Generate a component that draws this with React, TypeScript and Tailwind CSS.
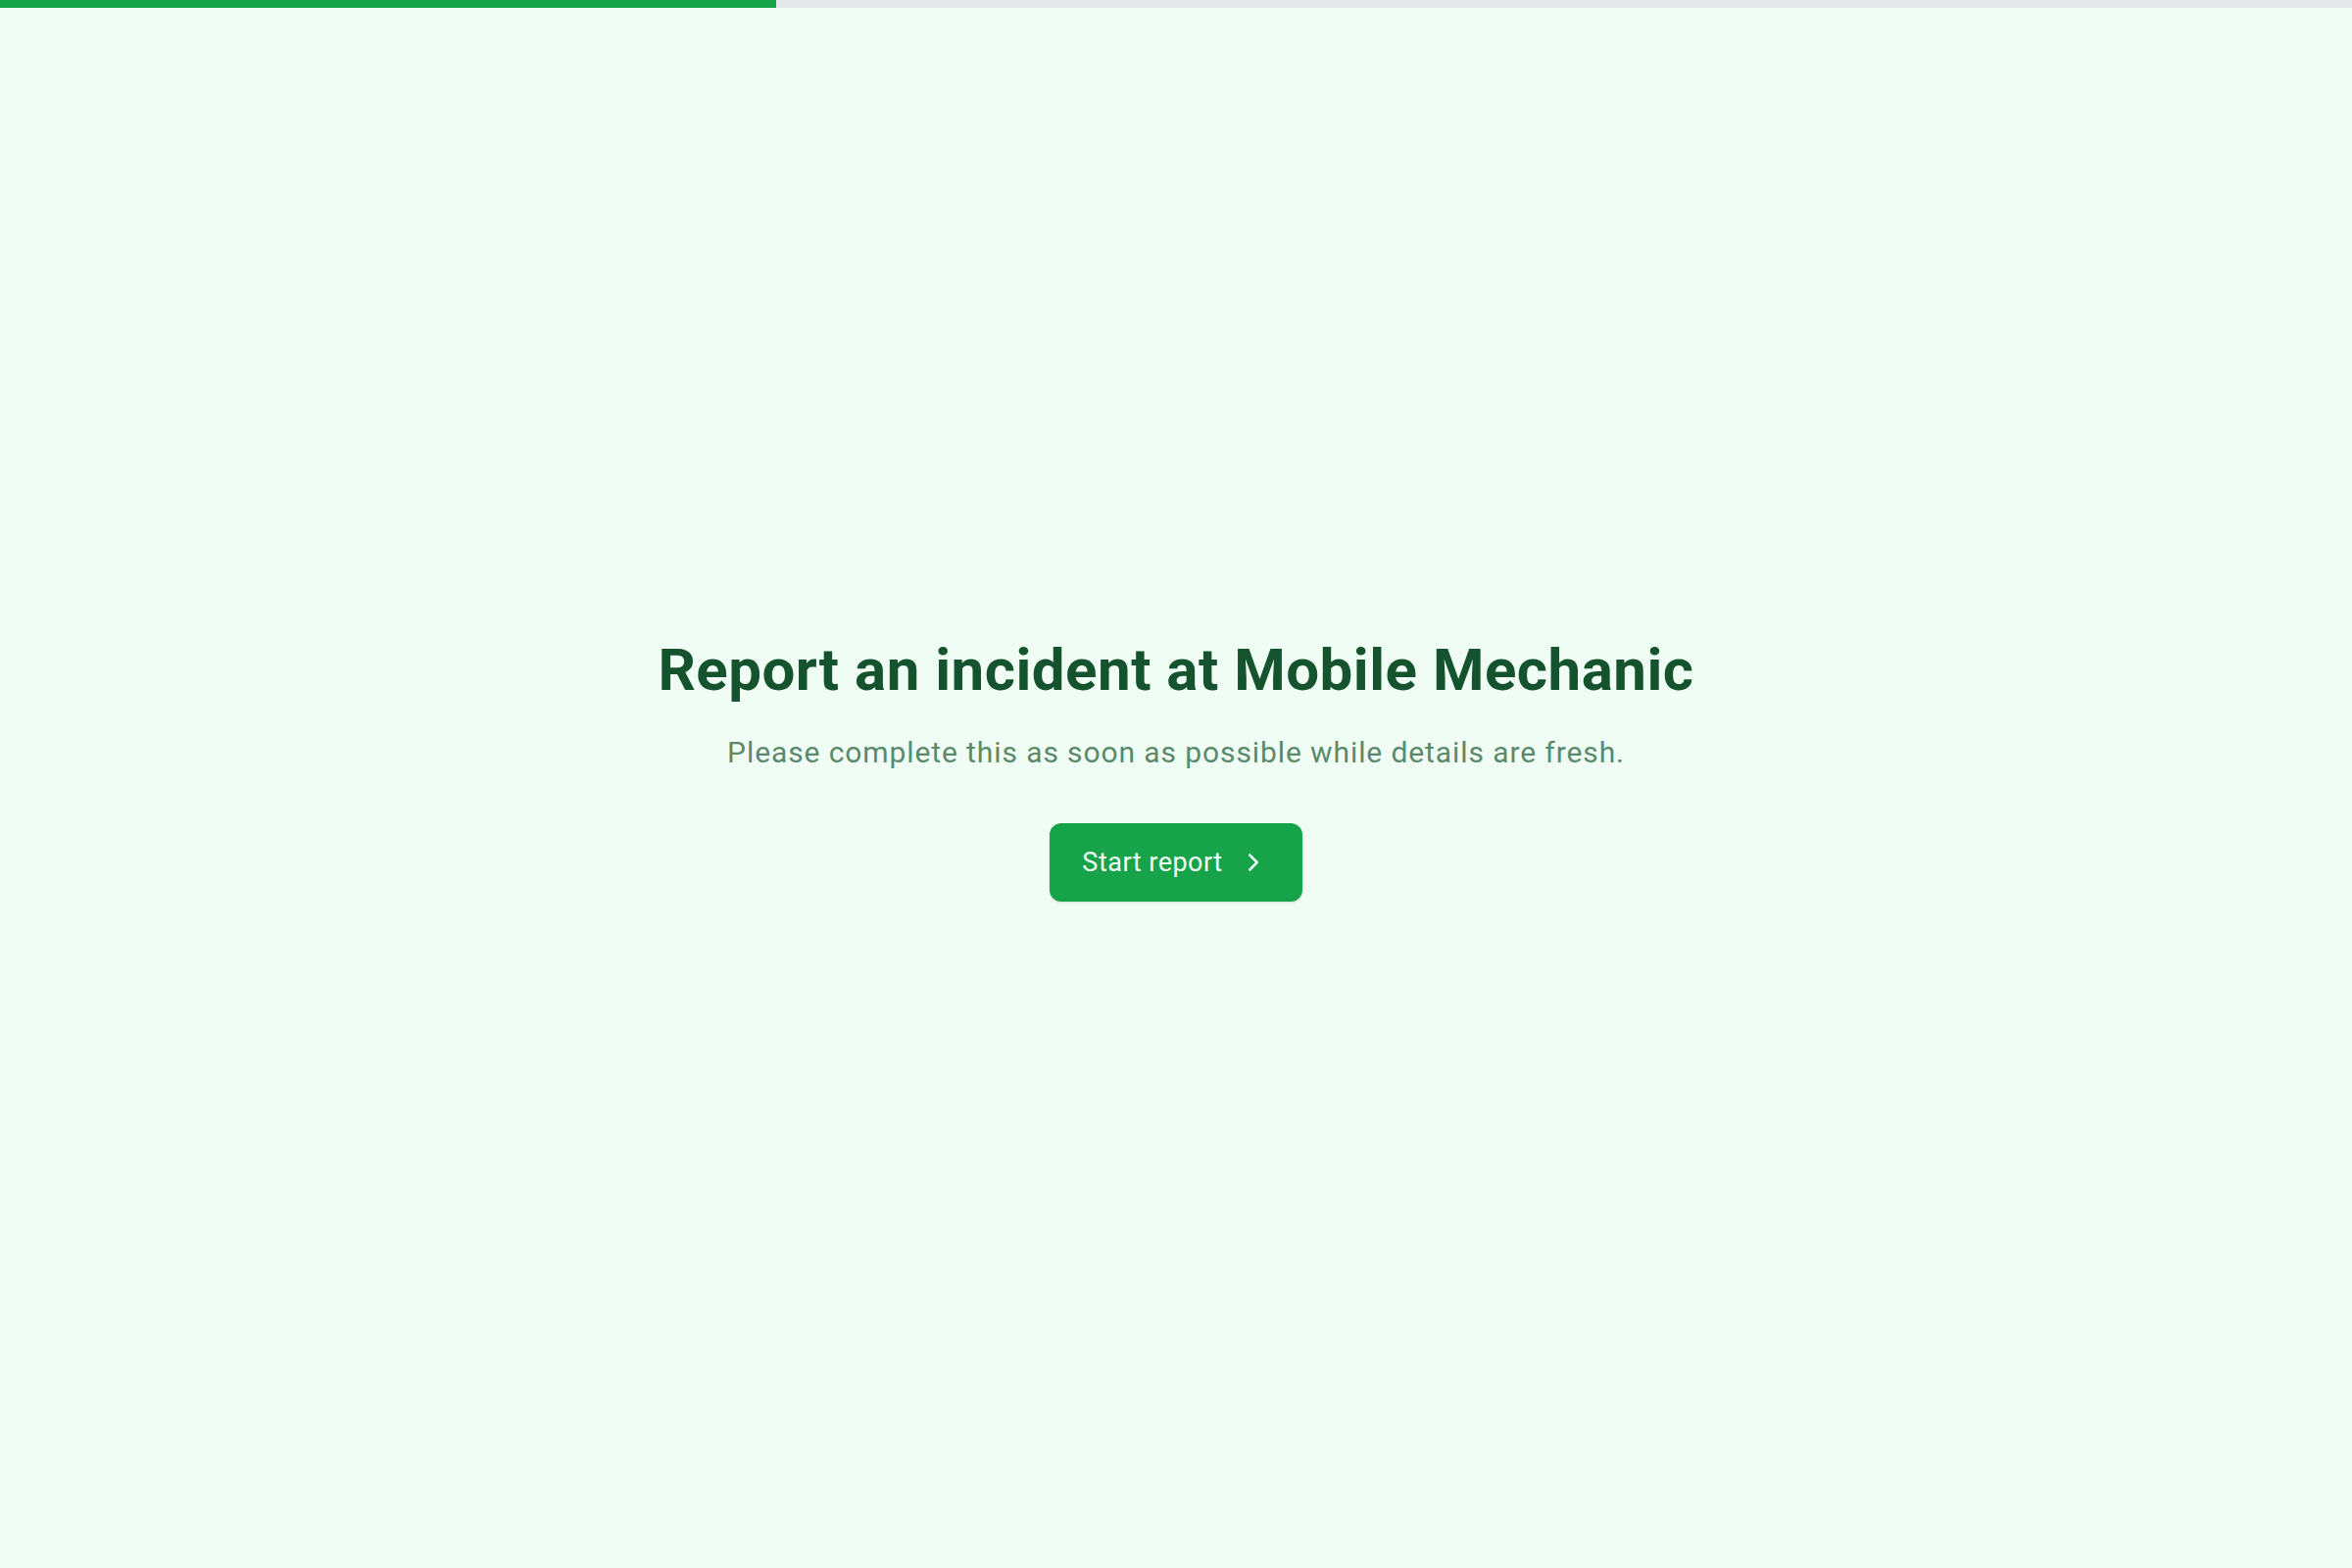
import { ChevronRight } from 'lucide-react';

export default function App() {
  return (
    <div className="min-h-screen flex flex-col bg-[#f0fdf4] font-['Roboto','Noto_Sans',sans-serif]">
      {/* Progress */}
      <div className="h-[8px] w-full bg-[#e5e7eb]">
        <div className="h-full w-[33%] bg-[#16a34a]" />
      </div>

      <main className="flex-1 flex flex-col items-center justify-center pb-[40px] text-center">
        <h1 className="text-[60px] leading-[72px] font-bold tracking-[0.5px] text-[#14532d]">
          Report an incident at Mobile Mechanic
        </h1>
        <p className="mt-[28px] text-[30px] leading-[40px] tracking-[0.9px] text-[#5b8a6b]">
          Please complete this as soon as possible while details are fresh.
        </p>
        <button className="mt-[52px] h-[80px] pl-[33px] pr-[35px] flex items-center gap-[16px] rounded-[12px] bg-[#16a34a] text-[#f0fdf4] text-[27px] tracking-[0.5px] shadow-sm">
          Start report
          <ChevronRight size={30} strokeWidth={2} />
        </button>
      </main>
    </div>
  );
}
